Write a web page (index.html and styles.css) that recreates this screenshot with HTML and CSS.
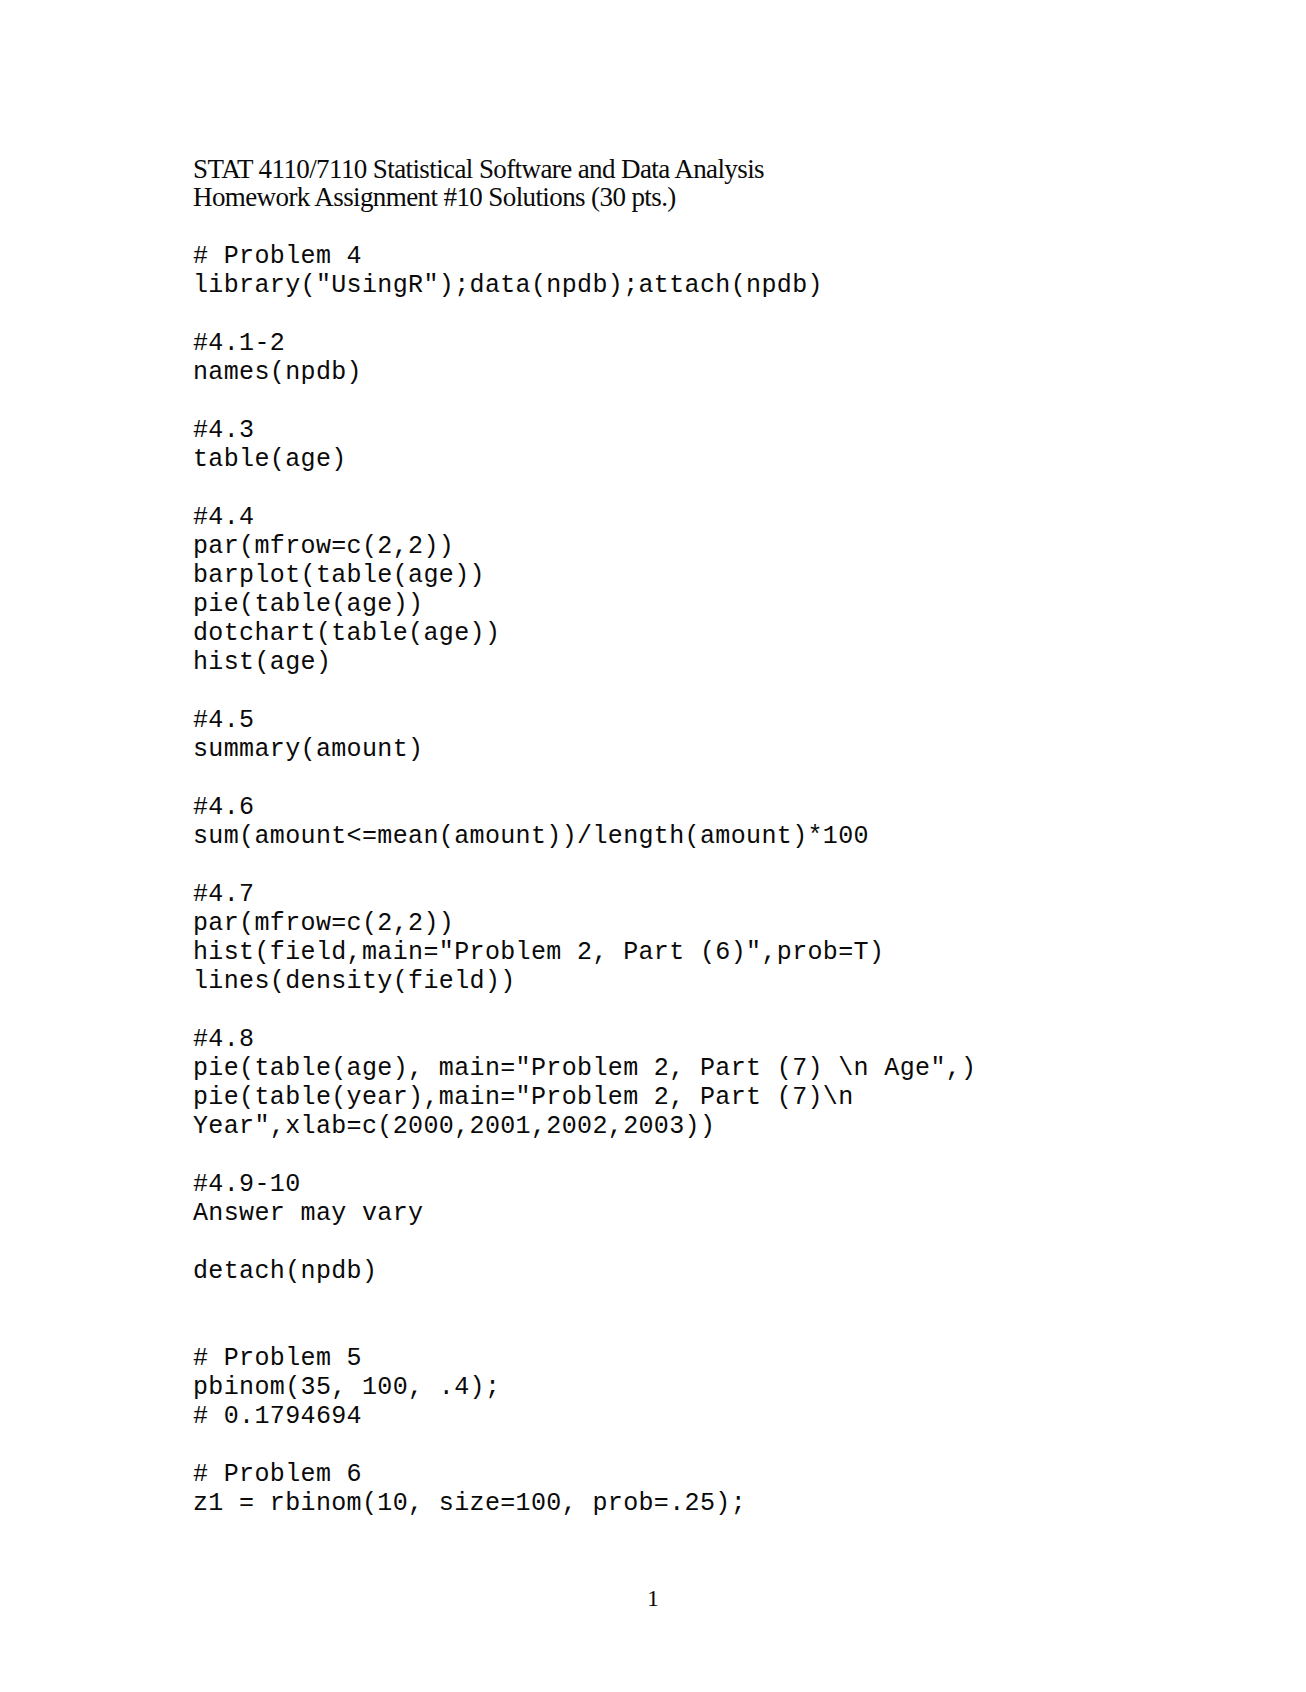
FILE: index.html
```html
<!DOCTYPE html>
<html>
<head>
<meta charset="utf-8">
<link rel="stylesheet" href="styles.css">
</head>
<body>
<div class="page">
<div class="title">
<div class="title-line">STAT 4110/7110 Statistical Software and Data Analysis</div>
<div class="title-line">Homework Assignment #10 Solutions (30 pts.)</div>
</div>
<pre class="code"># Problem 4
library("UsingR");data(npdb);attach(npdb)

#4.1-2
names(npdb)

#4.3
table(age)

#4.4
par(mfrow=c(2,2))
barplot(table(age))
pie(table(age))
dotchart(table(age))
hist(age)

#4.5
summary(amount)

#4.6
sum(amount&lt;=mean(amount))/length(amount)*100

#4.7
par(mfrow=c(2,2))
hist(field,main="Problem 2, Part (6)",prob=T)
lines(density(field))

#4.8
pie(table(age), main="Problem 2, Part (7) \n Age",)
pie(table(year),main="Problem 2, Part (7)\n
Year",xlab=c(2000,2001,2002,2003))

#4.9-10
Answer may vary

detach(npdb)


# Problem 5
pbinom(35, 100, .4);
# 0.1794694

# Problem 6
z1 = rbinom(10, size=100, prob=.25);</pre>
<div class="page-number">1</div>
</div>
</body>
</html>
```

FILE: styles.css
```css
html, body {
  margin: 0;
  padding: 0;
  background: #ffffff;
}

.page {
  width: 1306px;
  height: 1692px;
  box-sizing: border-box;
  padding: 155px 0 0 193px;
  color: #0a0a0a;
}

.title {
  font-family: "Liberation Serif", "Times New Roman", serif;
  font-size: 27px;
  line-height: 28px;
  letter-spacing: -0.6px;
}

.code {
  margin: 31px 0 0 0;
  font-family: "Liberation Mono", "Courier New", monospace;
  font-size: 25px;
  line-height: 29px;
  letter-spacing: 0.36px;
  white-space: pre;
}

.page-number {
  margin-top: 66px;
  width: 920px;
  text-align: center;
  font-family: "Liberation Serif", "Times New Roman", serif;
  font-size: 24px;
  line-height: 28px;
}
```
